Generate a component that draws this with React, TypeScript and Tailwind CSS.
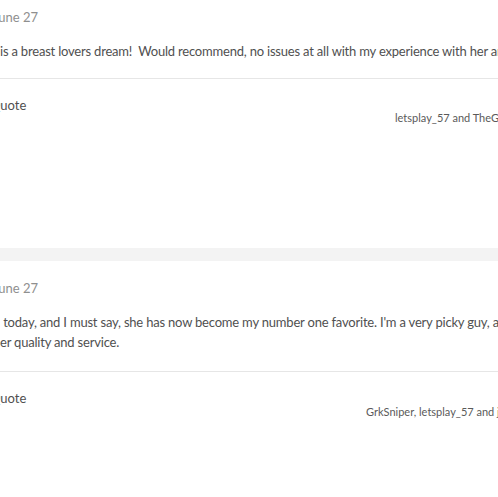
function Post({
  lines,
  bodyPad,
  reactions,
  reactionsOffset,
}: {
  lines: { text: string; offset: string }[];
  bodyPad: string;
  reactions: string;
  reactionsOffset: string;
}) {
  return (
    <article className="bg-white pt-[19px]">
      <div className="leading-[16px] text-[13px] text-[#8f8f8f] whitespace-nowrap -ml-[7px]">
        June 27
      </div>
      <div className={`${bodyPad} text-[13px] tracking-[-0.2px] leading-[20px] text-[#505050]`}>
        {lines.map((l) => (
          <p key={l.text} className={`${l.offset} whitespace-pre`}>
            {l.text}
          </p>
        ))}
      </div>
      <div className="border-t border-[#e6e6e6]" />
      <div className="pt-[17px] text-[13px] text-[#505050] whitespace-nowrap -ml-[10px] leading-[18px]">
        Quote
      </div>
      <div className={`${reactionsOffset} text-[11px] leading-[16px] text-[#5a5a5a] whitespace-nowrap`}>
        {reactions}
      </div>
    </article>
  );
}

export default function App() {
  return (
    <div
      className="w-[498px] h-[497px] overflow-hidden bg-white"
      style={{ fontFamily: "Lato, 'Open Sans', sans-serif" }}
    >
      <div className="-mt-[10px]">
        <Post
          bodyPad="pt-[16px] pb-[17px]"
          lines={[
            {
              text: "is a breast lovers dream!  Would recommend, no issues at all with my experience with her and will be back soon.",
              offset: "ml-0",
            },
          ]}
          reactions="letsplay_57 and TheGentleman like this"
          reactionsOffset="pl-[395px] -mt-[4px] pb-[122px]"
        />
      </div>
      <div className="h-[13px] bg-[#f3f3f3]" />
      <Post
        bodyPad="pt-[16px] pb-[19px]"
        lines={[
          {
            text: " today, and I must say, she has now become my number one favorite. I'm a very picky guy, and she exceeded",
            offset: "ml-[0px]",
          },
          { text: "her quality and service.", offset: "-ml-[7px]" },
        ]}
        reactions="GrkSniper, letsplay_57 and jayb like this"
        reactionsOffset="pl-[366px] -mt-[3px] pb-[60px]"
      />
    </div>
  );
}
